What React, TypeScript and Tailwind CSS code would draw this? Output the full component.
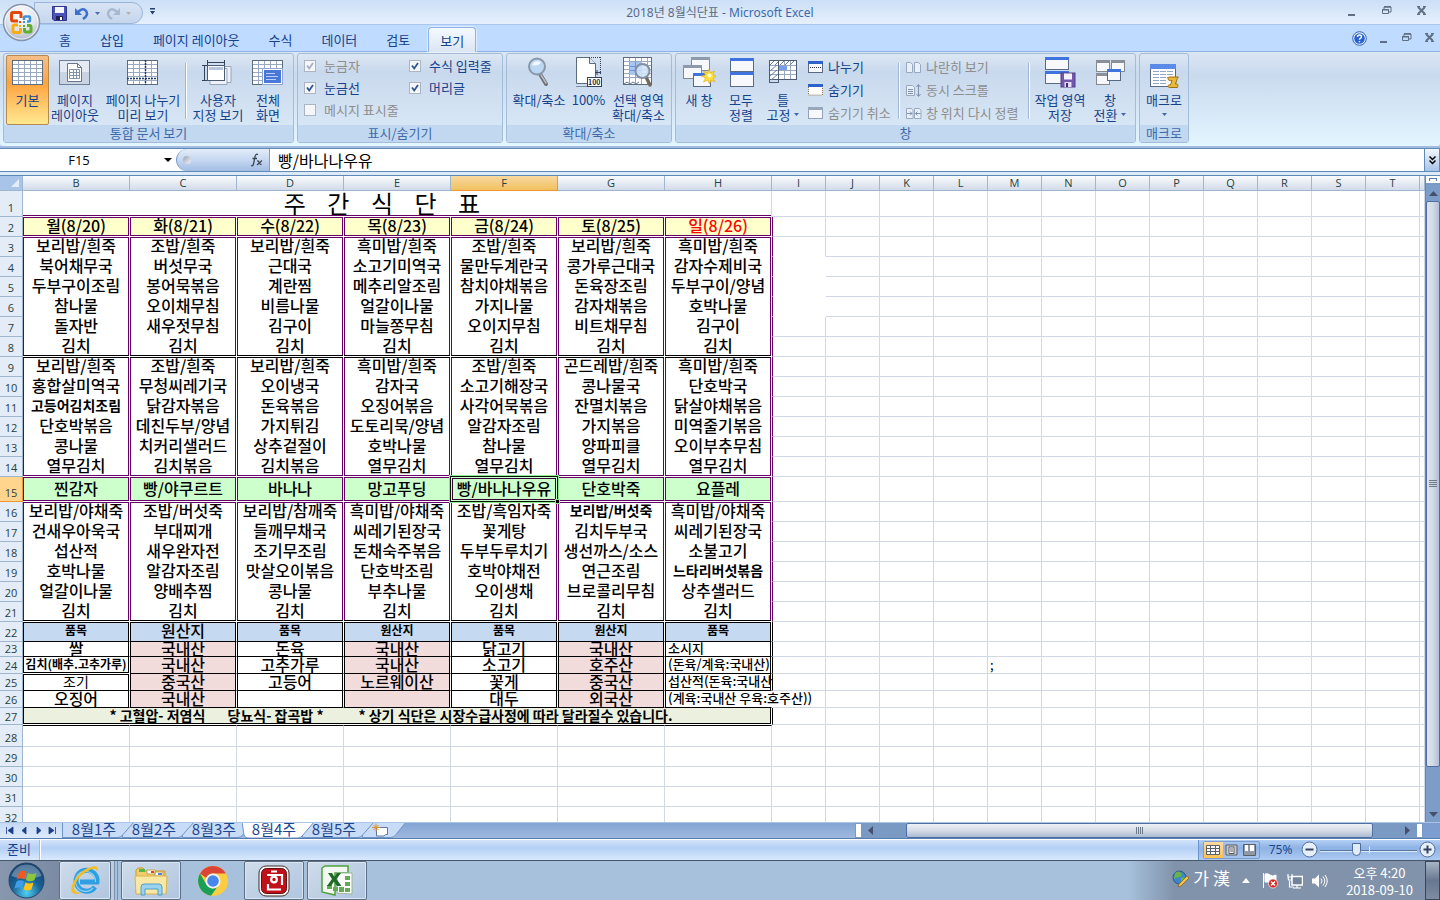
import React from 'react';
import clsx from 'clsx';

const MENU_COLUMNS = ['B', 'C', 'D', 'E', 'F', 'G', 'H'];
const EMPTY_COLUMNS = ['I', 'J', 'K', 'L', 'M', 'N', 'O', 'P', 'Q', 'R', 'S', 'T'];

// Rows 2 - 26 of the sheet, one entry per column B - H
const ROWS: Record<number, string[]> = {
    2: ['월(8/20)', '화(8/21)', '수(8/22)', '목(8/23)', '금(8/24)', '토(8/25)', '일(8/26)'],
    3: ['보리밥/흰죽', '조밥/흰죽', '보리밥/흰죽', '흑미밥/흰죽', '조밥/흰죽', '보리밥/흰죽', '흑미밥/흰죽'],
    4: ['북어채무국', '버섯무국', '근대국', '소고기미역국', '물만두계란국', '콩가루근대국', '감자수제비국'],
    5: ['두부구이조림', '봉어묵볶음', '계란찜', '메추리알조림', '참치야채볶음', '돈육장조림', '두부구이/양념'],
    6: ['참나물', '오이채무침', '비름나물', '얼갈이나물', '가지나물', '감자채볶음', '호박나물'],
    7: ['돌자반', '새우젓무침', '김구이', '마늘쫑무침', '오이지무침', '비트채무침', '김구이'],
    8: ['김치', '김치', '김치', '김치', '김치', '김치', '김치'],
    9: ['보리밥/흰죽', '조밥/흰죽', '보리밥/흰죽', '흑미밥/흰죽', '조밥/흰죽', '곤드레밥/흰죽', '흑미밥/흰죽'],
    10: ['홍합살미역국', '무청씨레기국', '오이냉국', '감자국', '소고기해장국', '콩나물국', '단호박국'],
    11: ['고등어김치조림', '닭감자볶음', '돈육볶음', '오징어볶음', '사각어묵볶음', '잔멸치볶음', '닭살야채볶음'],
    12: ['단호박볶음', '데친두부/양념', '가지튀김', '도토리묵/양념', '알감자조림', '가지볶음', '미역줄기볶음'],
    13: ['콩나물', '치커리샐러드', '상추겉절이', '호박나물', '참나물', '양파피클', '오이부추무침'],
    14: ['열무김치', '김치볶음', '김치볶음', '열무김치', '열무김치', '열무김치', '열무김치'],
    15: ['찐감자', '빵/야쿠르트', '바나나', '망고푸딩', '빵/바나나우유', '단호박죽', '요플레'],
    16: ['보리밥/야채죽', '조밥/버섯죽', '보리밥/참깨죽', '흑미밥/야채죽', '조밥/흑임자죽', '보리밥/버섯죽', '흑미밥/야채죽'],
    17: ['건새우아욱국', '부대찌개', '들깨무채국', '씨레기된장국', '꽃게탕', '김치두부국', '씨레기된장국'],
    18: ['섭산적', '새우완자전', '조기무조림', '돈채숙주볶음', '두부두루치기', '생선까스/소스', '소불고기'],
    19: ['호박나물', '알감자조림', '맛살오이볶음', '단호박조림', '호박야채전', '연근조림', '느타리버섯볶음'],
    20: ['얼갈이나물', '양배추찜', '콩나물', '부추나물', '오이생채', '브로콜리무침', '상추샐러드'],
    21: ['김치', '김치', '김치', '김치', '김치', '김치', '김치'],
    22: ['품목', '원산지', '품목', '원산지', '품목', '원산지', '품목'],
    23: ['쌀', '국내산', '돈육', '국내산', '닭고기', '국내산', '소시지'],
    24: ['김치(배추.고추가루)', '국내산', '고추가루', '국내산', '소고기', '호주산', '(돈육/계육:국내산)'],
    25: ['조기', '중국산', '고등어', '노르웨이산', '꽃게', '중국산', '섭산적(돈육:국내산'],
    26: ['오징어', '국내산', '', '', '대두', '외국산', '(계육:국내산 우육:호주산))'],
};

const NOTICE = '* 고혈압- 저염식       당뇨식- 잡곡밥 *           * 상기 식단은 시장수급사정에 따라 달라질수 있습니다.';

const ROW_NUMBERS = Array.from({ length: 32 }, (_, i) => i + 1);

function rowHeight(row: number) {
    if (row === 1) return 'h-[26px]';
    if (row === 15) return 'h-[25px]';
    if (row === 23) return 'h-[15px]';
    if (row >= 24 && row <= 27) return 'h-[17px]';
    if (row === 28) return 'h-[22px]';
    return 'h-[20px]';
}

// The double lines are drawn as an inset line on both sides of the grid line
function cellFrame(row: number, col: string) {
    if (row === 2 || row === 15) return 'border-b border-white shadow-[inset_0_0_0_1px_#660066]';
    if (row === 3 || row === 16) return 'border-white shadow-[inset_1px_0_0_0_#660066,inset_-1px_0_0_0_#660066,inset_0_1px_0_0_#660066]';
    if (row === 9) return 'border-white shadow-[inset_0_1px_0_0_#000000,inset_1px_0_0_0_#660066,inset_-1px_0_0_0_#660066]';
    if (row === 8 || row === 21) return 'border-b border-white shadow-[inset_0_-1px_0_0_#000000,inset_1px_0_0_0_#660066,inset_-1px_0_0_0_#660066]';
    if (row === 14) return 'border-b border-white shadow-[inset_1px_0_0_0_#660066,inset_-1px_0_0_0_#660066,inset_0_-1px_0_0_#660066]';
    if (row < 22) return 'border-white shadow-[inset_1px_0_0_0_#660066,inset_-1px_0_0_0_#660066]';
    if (row === 24 && col === 'B') return 'border-b border-white shadow-[inset_1px_0_0_0_#000000,inset_-1px_0_0_0_#000000,inset_0_-1px_0_0_#000000]';
    if (row === 22 || (row === 25 && col === 'B'))
        return 'border-b border-b-black border-r-white shadow-[inset_1px_0_0_0_#000000,inset_-1px_0_0_0_#000000,inset_0_1px_0_0_#000000]';
    if (row === 26 && col === 'H') return 'border-b border-b-black border-r-white shadow-[inset_1px_0_0_0_#000000]';
    return 'border-b border-b-black border-r-white shadow-[inset_1px_0_0_0_#000000,inset_-1px_0_0_0_#000000]';
}

function cellFill(row: number, col: string) {
    if (row === 2) return 'bg-[#ffffcc]';
    if (row === 15) return 'bg-[#ccffcc]';
    if (row === 22) return 'bg-[#c5d9f1]';
    if (row > 22 && 'CEG'.includes(col)) return 'bg-[#f2dcdb]';
    return 'bg-white';
}

function cellText(row: number, col: string) {
    const key = `${col}${row}`;
    if (key === 'H2') return 'text-center text-[16px] font-medium text-[#ff0000]';
    if (['B11', 'G16', 'H19'].includes(key)) return 'text-center text-[14px] font-bold';
    if (key === 'B25') return 'text-center text-[14px]';
    if (key === 'B24') return 'text-center text-[12px] font-bold';
    if (row === 22 && col !== 'C') return 'text-center text-[12px] font-bold';
    if (row > 22 && col === 'H') return 'pl-[3px] text-left text-[13px] font-medium';
    return 'text-center text-[16px] font-medium';
}

function lineHeight(row: number) {
    if (row === 15) return 'leading-[22px]';
    if (row === 23) return 'leading-[12px]';
    if (row >= 24 && row <= 27) return 'leading-[14px]';
    return 'leading-[16px]';
}

const MenuCell = ({ row, col, text }: { row: number; col: string; text: string }) => (
    <td
        className={clsx(
            'relative whitespace-nowrap border-r p-0 align-top',
            row === 15 && col === 'F' ? 'border-b border-white' : cellFrame(row, col),
            cellFill(row, col)
        )}
    >
        <div className={clsx(cellText(row, col), lineHeight(row))}>{text}</div>
        {row === 15 && col === 'F' && (
            <>
                <span className="absolute -inset-[2px] z-10 border border-[#8fe88f] shadow-[inset_0_0_0_1px_#001800]" />
                <span className="absolute inset-px z-10 border border-[#330033]" />
                <span className="absolute -bottom-[3px] -right-[3px] z-20 h-[5px] w-[5px] border border-[#8fe88f] bg-black" />
            </>
        )}
    </td>
);

const EmptyCell = ({ row, col }: { row: number; col: string }) => {
    const first = col === 'I';
    const hidden = first && row >= 3 && row < 7;
    return (
        <td
            className={clsx(
                'whitespace-nowrap border-b border-r p-0 align-middle',
                hidden ? 'border-b-white' : 'border-b-[#d0d7e5]',
                hidden && row > 3 ? 'border-r-white' : 'border-r-[#d0d7e5]',
                first && row >= 2 && row <= 21 && 'border-l border-l-[#660066]',
                first && row >= 22 && row <= 27 && row !== 26 && 'border-l border-l-black'
            )}
        >
            {row === 24 && col === 'M' && <div className="pl-0.5 text-[13px] leading-[14px]">;</div>}
        </td>
    );
};

const Sheet = () => (
    <table className="w-full table-fixed border-separate border-spacing-0 text-black">
        <colgroup>
            <col className="w-[23px]" />
            {MENU_COLUMNS.map((c) => (
                <col key={c} className="w-[107px]" />
            ))}
            {EMPTY_COLUMNS.map((c) => (
                <col key={c} className="w-[54px]" />
            ))}
            <col />
        </colgroup>
        <thead>
            <tr className="h-[15px]">
                <th className="border-b border-r border-[#9eb6ce] bg-[#a9c4e9] p-0">
                    <svg className="ml-auto mr-0.5 block" width="10" height="10" viewBox="0 0 10 10">
                        <path d="M9 1v8H1z" fill="#e4ecf7" />
                    </svg>
                </th>
                {[...MENU_COLUMNS, ...EMPTY_COLUMNS, ''].map((c) => (
                    <th
                        key={c}
                        scope="col"
                        className={clsx(
                            "border-b border-r p-0 font-['Open_Sans',sans-serif] text-[11px] font-normal leading-[14px] text-[#27413e]",
                            c === 'F'
                                ? 'border-[#f29536] bg-linear-to-b from-[#f9d99f] to-[#f1c15f]'
                                : 'border-[#9eb6ce] bg-linear-to-b from-[#f9fcfd] to-[#d3dbe9]'
                        )}
                    >
                        {c}
                    </th>
                ))}
            </tr>
        </thead>
        <tbody>
            {ROW_NUMBERS.map((row) => (
                <tr key={row} className={rowHeight(row)}>
                    <th
                        scope="row"
                        className={clsx(
                            "border-b border-r p-0 align-bottom font-['Open_Sans',sans-serif] text-[11px] font-normal text-[#27413e]",
                            row === 15 ? 'border-[#f29536] bg-[#ffd58d]' : 'border-[#9eb6ce] bg-[#e4ecf7]'
                        )}
                    >
                        <div className={row >= 23 && row <= 27 ? 'leading-[14px]' : 'leading-[16px]'}>{row}</div>
                    </th>
                    {row === 1 && (
                        <td
                            colSpan={7}
                            className="whitespace-pre border-b border-r border-b-white border-r-[#d0d7e5] p-0 pr-[30px] text-center align-top text-[24px] leading-[24px] shadow-[inset_0_-1px_0_0_#660066]"
                        >
                            {'주    간    식    단    표'}
                        </td>
                    )}
                    {ROWS[row]?.map((text, i) => (
                        <MenuCell key={MENU_COLUMNS[i]} row={row} col={MENU_COLUMNS[i]} text={text} />
                    ))}
                    {row === 27 && (
                        <td
                            colSpan={7}
                            className="whitespace-pre border-b border-r border-white bg-[#ebf1de] p-0 pr-3 text-center align-top text-[14px] font-bold leading-[14px] shadow-[inset_1px_0_0_0_#000000,inset_-1px_0_0_0_#000000,inset_0_-1px_0_0_#000000]"
                        >
                            {NOTICE}
                        </td>
                    )}
                    {row > 27 &&
                        MENU_COLUMNS.map((c) => (
                            <td
                                key={c}
                                className={clsx(
                                    'border-b border-r border-[#d0d7e5] p-0',
                                    row === 28 && 'border-t border-t-black'
                                )}
                            />
                        ))}
                    {[...EMPTY_COLUMNS, 'U'].map((c) => (
                        <EmptyCell key={c} row={row} col={c} />
                    ))}
                </tr>
            ))}
        </tbody>
    </table>
);

/* ---------- icons ---------- */

const GridLines = ({ x = 1, y = 4, w = 30, h = 24 }: { x?: number; y?: number; w?: number; h?: number }) => (
    <g>
        <rect x={x + 0.5} y={y + 0.5} width={w} height={h} fill="#fff" stroke="#5b6b80" />
        <path
            d={`M${x + 6.5} ${y + 1}v${h - 1}M${x + 12.5} ${y + 1}v${h - 1}M${x + 18.5} ${y + 1}v${h - 1}M${x + 24.5} ${y + 1}v${h - 1}M${x + 1} ${y + 4.5}h${w - 1}M${x + 1} ${y + 8.5}h${w - 1}M${x + 1} ${y + 12.5}h${w - 1}M${x + 1} ${y + 16.5}h${w - 1}M${x + 1} ${y + 20.5}h${w - 1}`}
            stroke="#9aa9c2"
            fill="none"
        />
    </g>
);

const Win = ({ x, y, w, h, bar = '#3f74de', line = '#5a6a82' }: { x: number; y: number; w: number; h: number; bar?: string; line?: string }) => (
    <g>
        <rect x={x + 0.5} y={y + 0.5} width={w} height={h} fill="#f6f8fc" stroke={line} />
        <rect x={x} y={y} width={w + 1} height="3" fill={bar} />
    </g>
);

const icons: Record<string, React.ReactNode> = {
    normal: <GridLines />,
    pageLayout: (
        <>
            <rect x="1.5" y="4.5" width="30" height="24" fill="#e4eaf3" stroke="#6f7f96" />
            <path d="M2 16h29v12H2z" fill="#c9d3e2" />
            <path d="M9.5 7.500h10l4 4v14h-14z" fill="#fff" stroke="#66768e" />
            <path d="M19.500 7.500v4h4" fill="none" stroke="#66768e" />
            <path d="M11.500 13.500h10v9h-10zM11.500 16.500h10M11.500 19.500h10M15.500 13.500v9M18.500 13.500v9" fill="none" stroke="#8291a8" />
        </>
    ),
    pageBreak: (
        <>
            <GridLines />
            <path d="M19.500 4v25M1 22.500h31" stroke="#1f3d70" strokeDasharray="2 1" fill="none" strokeWidth="1.5" />
        </>
    ),
    custom: (
        <>
            <path d="M13 10.500h17v16H13z" fill="#eef2f8" stroke="#97a5ba" />
            <path d="M9 12.500h17v16H9z" fill="#eef2f8" stroke="#97a5ba" />
            <rect x="6.500" y="9.500" width="17" height="15" fill="#fff" stroke="#4d5c72" />
            <path d="M8 11h14v3H8z" fill="#b8c6db" />
            <path d="M6 6.500h18M6.500 4v5M23.500 4v5M3.500 9v16M1 9.500h5M1 24.500h5" stroke="#33435c" fill="none" />
        </>
    ),
    fullScreen: (
        <>
            <GridLines />
            <rect x="11.500" y="12.500" width="20" height="16" fill="#fff" stroke="#8fa6d4" />
            <rect x="13" y="14" width="17" height="13" fill="#4a78d8" />
            <path d="M15 17.500h9M15 20.500h12M15 23.500h10" stroke="#b9d0ff" />
        </>
    ),
    zoom: (
        <>
            <path d="M18 18l6 10" stroke="#6e7076" strokeWidth="4" strokeLinecap="round" />
            <path d="M19 19l5 8" stroke="#b9bcc2" strokeWidth="1.500" strokeLinecap="round" />
            <circle cx="15" cy="10.500" r="8" fill="#bcd7f3" stroke="#8a97a8" strokeWidth="2" />
            <path d="M10 9a6 5 0 019-3c-2 4-6 4-9 3z" fill="#f1f8ff" />
        </>
    ),
    hundred: (
        <>
            <path d="M4.500 1.500h13l6 6v20h-19z" fill="#fff" stroke="#5b6b80" />
            <path d="M17.500 1.500v6h6" fill="#dde6f2" stroke="#5b6b80" />
            <path d="M17 1.500h12M28.500 1v18M4.500 30.500h11" stroke="#33435c" strokeDasharray="1 1" />
            <path d="M23 16.500h6M25 14v5" stroke="#33435c" fill="none" />
            <rect x="15.500" y="21.500" width="14" height="9" fill="#fff" stroke="#33435c" />
            <text x="16" y="29" fontSize="7" fontWeight="700" fill="#1b2a44">100</text>
        </>
    ),
    zoomSelection: (
        <>
            <GridLines x={1} y={1} w={28} h={27} />
            <path d="M8 6h12v13H8z" fill="#a8c6f5" />
            <path d="M8 10.500h12M8 14.500h12M13.500 6v13" stroke="#6c93d8" />
            <path d="M24 21l4 8" stroke="#75695e" strokeWidth="3.500" strokeLinecap="round" />
            <circle cx="20.500" cy="15" r="7" fill="#cfe3f8" fillOpacity=".85" stroke="#8390a2" strokeWidth="2" />
            <path d="M2 28l3-2 3 2 3-2 3 2 3-2" stroke="#66768e" fill="none" />
        </>
    ),
    newWindow: (
        <>
            <Win x={9} y={1} w={18} h={13} bar="#8e99ab" line="#7c889b" />
            <Win x={1} y={9} w={18} h={13} bar="#8e99ab" line="#7c889b" />
            <Win x={11} y={17} w={17} h={13} />
            <path d="M27 13l1.500 4 4-2-1.500 4 4 1-4 2 2 4-4-2-1.500 4-2-4-4 2 2-4-4-2 4-1-2-4 4 2z" fill="#ffdf3a" stroke="#e0a810" strokeWidth=".6" />
            <circle cx="27.500" cy="19.500" r="2" fill="#fffbd0" />
        </>
    ),
    arrange: (
        <>
            <Win x={6} y={2} w={23} h={13} />
            <Win x={6} y={16} w={23} h={14} />
        </>
    ),
    freeze: (
        <>
            <rect x="3.500" y="4.500" width="27" height="19" fill="#fff" stroke="#4d5c72" />
            <path d="M4 9.500h26M12.500 5v18M4 14.500h26M4 18.500h26M18.500 5v18M24.500 5v18" stroke="#9aa9c2" />
            <path d="M4 9l4-4M9 9l4-4M14 9l4-4M19 9l4-4M24 9l4-4M4 15l7-6M4 20l7-6M5 24l7-6" stroke="#6b82ad" />
            <path d="M13 10h8v4h-8z" fill="#76a0ec" />
            <rect x="3.500" y="4.500" width="9" height="22" fill="none" stroke="#4d5c72" />
        </>
    ),
    saveWorkspace: (
        <>
            <Win x={2} y={1} w={23} h={12} />
            <Win x={2} y={15} w={23} h={12} />
            <rect x="18" y="17" width="14" height="14" fill="#7357ad" stroke="#533c88" />
            <rect x="21" y="17.500" width="8" height="6" fill="#f5f2fc" />
            <rect x="21.500" y="26" width="7" height="5" fill="#e3dcf2" />
            <rect x="23" y="27" width="2" height="4" fill="#3d2b68" />
        </>
    ),
    switchWindows: (
        <>
            <Win x={3} y={4} w={13} h={11} bar="#8a8f98" line="#83888f" />
            <Win x={18} y={4} w={13} h={11} bar="#8a8f98" line="#83888f" />
            <Win x={3} y={17} w={13} h={11} bar="#8a8f98" line="#83888f" />
            <Win x={14} y={13} w={13} h={11} />
        </>
    ),
    macro: (
        <>
            <rect x="3.500" y="8.500" width="25" height="22" fill="#fff" stroke="#5a6a82" />
            <path d="M3 8h26v5H3z" fill="#5b8be8" />
            <path d="M6 15.500h20M6 18.500h20M6 21.500h20M6 24.500h14M6 27.500h13" stroke="#90a5cc" strokeDasharray="6 1" />
            <path d="M21 22.500c0-1.500 1-1.500 2-1.500h8.500c-1 1-1.500 2-2 4l-1 3c2 0 3 0 2 3.500h-8c-2 0-2-2.500-.5-2.500h1.500l1.500-4.500c-2 .5-4 0-4-2z" fill="#e9b93c" stroke="#9c6f10" />
        </>
    ),
};

const Down = ({ className }: { className?: string }) => (
    <svg className={clsx('inline-block', className)} width="5" height="3" viewBox="0 0 5 3">
        <path d="M0 0h5L2.500 3z" fill="currentColor" />
    </svg>
);

/* ---------- ribbon ---------- */

interface BigButtonProps {
    icon: string;
    lines: string[];
    width: string;
    arrow?: boolean;
    active?: boolean;
}

const BigButton = ({ icon, lines, width, arrow, active }: BigButtonProps) => (
    <button
        className={clsx(
            'flex h-[70px] shrink-0 flex-col items-center whitespace-nowrap rounded-[2px] border',
            width,
            active
                ? 'border-[#b3894f] bg-linear-to-b from-[#f5bf86] via-[#fca33c] via-40% to-[#ffe88f]'
                : 'border-transparent'
        )}
    >
        <svg width="34" height="32" viewBox="0 0 34 32" className="mb-1 shrink-0">
            {icons[icon]}
        </svg>
        {lines.map((line, i) => (
            <span key={i} className="flex h-[15px] items-center leading-[15px]">
                {line}
                {arrow && i === lines.length - 1 && <Down className={line ? 'ml-1 text-[#3d68b0]' : 'text-[#3d68b0]'} />}
            </span>
        ))}
    </button>
);

const Separator = () => <div className="mt-2 h-[56px] w-[2px] shrink-0 border-l border-[#9fb6d3] bg-white" />;

const Group = ({ label, width, children }: { label: string; width: string; children: React.ReactNode }) => (
    <section
        className={clsx(
            'flex h-[90px] shrink-0 flex-col overflow-hidden rounded-[3px] border border-[#a3bcd8] bg-linear-to-b from-[#dde7f3] via-[#c9d9ed] via-20% to-[#dcebf8]',
            width
        )}
    >
        <div className="flex flex-1 px-[2px] pt-px">{children}</div>
        <h2 className="h-[17px] bg-[#c1d8f0] text-center leading-[16px] text-[#3e6aaa]">{label}</h2>
    </section>
);

const Check = ({ label, checked, disabled }: { label: string; checked?: boolean; disabled?: boolean }) => (
    <label className={clsx('flex h-[22px] items-center gap-2 whitespace-nowrap', disabled && 'text-[#8d8d8d]')}>
        <span className="relative h-3 w-3">
            <input
                type="checkbox"
                defaultChecked={checked}
                disabled={disabled}
                className="block h-3 w-3 appearance-none border border-[#abb5c2] bg-[#f4f6f9]"
            />
            {checked && (
                <svg className="pointer-events-none absolute inset-0" width="12" height="12" viewBox="0 0 12 12">
                    <path d="M3 5.500l2.200 3L9 3" fill="none" stroke={disabled ? '#a4afc4' : '#33558f'} strokeWidth="1.800" />
                </svg>
            )}
        </span>
        {label}
    </label>
);

const smallIcons: Record<string, React.ReactNode> = {
    split: (
        <>
            <Win x={0} y={2} w={14} h={11} bar="#2f62c8" />
            <path d="M2 8.500h11" stroke="#222c3d" strokeDasharray="1 1" />
        </>
    ),
    hide: (
        <>
            <path d="M.5 5v8h14V5" fill="#fff" stroke="#8a7a4c" strokeDasharray="1 1" />
            <path d="M0 2h15v3H0z" fill="#2f62c8" />
        </>
    ),
    unhide: <Win x={0} y={2} w={14} h={11} bar="#9aa7bb" line="#93a0b5" />,
    side: <path d="M.5 3.500h4l2 2v8h-6zM8.500 3.500h4l2 2v8h-6z" fill="#eaf0f8" stroke="#98a8c1" />,
    sync: (
        <>
            <path d="M.5 3.500h6l2 2v8h-8z" fill="#eaf0f8" stroke="#98a8c1" />
            <path d="M2 7.500h5M2 9.500h5M2 11.500h5M12.500 3v11M10.500 5l2-2.500 2 2.500M10.500 12l2 2.500 2-2.500" stroke="#7f90ac" fill="none" />
        </>
    ),
    reset: (
        <>
            <path d="M.5 3.500h5l1.500 2v8H.5zM8.500 3.500h5l1.500 2v8H8.500z" fill="#eaf0f8" stroke="#98a8c1" />
            <path d="M1 8.500h5M4 6.500l2 2-2 2M14.500 8.500h-5M11.500 6.500l-2 2 2 2" stroke="#7f90ac" fill="none" />
        </>
    ),
};

const SmallButton = ({ icon, label, disabled }: { icon: string; label: string; disabled?: boolean }) => (
    <button disabled={disabled} className={clsx('flex h-[23px] items-center gap-1 whitespace-nowrap', disabled && 'text-[#8d8d8d]')}>
        <svg width="16" height="16" viewBox="0 0 16 16" className="shrink-0">
            {smallIcons[icon]}
        </svg>
        {label}
    </button>
);

const Ribbon = () => (
    <div className="flex h-[95px] shrink-0 gap-[3px] overflow-hidden rounded-b border-t border-[#8db2e3] bg-linear-to-b from-[#dbe6f4] via-[#c9daee] via-25% to-[#e3f6ff] pl-[3px] pt-px text-[#15428b]">
        <Group label="통합 문서 보기" width="w-[291px]">
            <BigButton icon="normal" lines={['기본']} width="w-[43px]" active />
            <BigButton icon="pageLayout" lines={['페이지', '레이아웃']} width="w-[52px]" />
            <BigButton icon="pageBreak" lines={['페이지 나누기', '미리 보기']} width="w-[84px]" />
            <Separator />
            <BigButton icon="custom" lines={['사용자', '지정 보기']} width="w-[62px]" />
            <BigButton icon="fullScreen" lines={['전체', '화면']} width="w-[38px]" />
        </Group>
        <Group label="표시/숨기기" width="w-[206px]">
            <div className="grid grid-cols-[105px_1fr] content-start pl-1">
                <Check label="눈금자" checked disabled />
                <Check label="수식 입력줄" checked />
                <Check label="눈금선" checked />
                <Check label="머리글" checked />
                <Check label="메시지 표시줄" disabled />
            </div>
        </Group>
        <Group label="확대/축소" width="w-[166px]">
            <BigButton icon="zoom" lines={['확대/축소']} width="w-[60px]" />
            <BigButton icon="hundred" lines={['100%']} width="w-[39px]" />
            <BigButton icon="zoomSelection" lines={['선택 영역', '확대/축소']} width="w-[61px]" />
        </Group>
        <Group label="창" width="w-[461px]">
            <BigButton icon="newWindow" lines={['새 창']} width="w-[42px]" />
            <BigButton icon="arrange" lines={['모두', '정렬']} width="w-[42px]" />
            <BigButton icon="freeze" lines={['틀', '고정']} width="w-[42px]" arrow />
            <div className="flex w-[94px] shrink-0 flex-col pl-1">
                <SmallButton icon="split" label="나누기" />
                <SmallButton icon="hide" label="숨기기" />
                <SmallButton icon="unhide" label="숨기기 취소" disabled />
            </div>
            <Separator />
            <div className="flex w-[128px] shrink-0 flex-col pl-1.5">
                <SmallButton icon="side" label="나란히 보기" disabled />
                <SmallButton icon="sync" label="동시 스크롤" disabled />
                <SmallButton icon="reset" label="창 위치 다시 정렬" disabled />
            </div>
            <Separator />
            <BigButton icon="saveWorkspace" lines={['작업 영역', '저장']} width="w-[60px]" />
            <BigButton icon="switchWindows" lines={['창', '전환']} width="w-[40px]" arrow />
        </Group>
        <Group label="매크로" width="w-[50px]">
            <BigButton icon="macro" lines={['매크로', '']} width="w-[44px]" arrow />
        </Group>
    </div>
);

/* ---------- window chrome ---------- */

const MinIcon = () => (
    <svg width="12" height="12" viewBox="0 0 12 12">
        <path d="M2 9h7v2H2z" fill="#5f6f84" />
    </svg>
);
const RestoreIcon = () => (
    <svg width="12" height="12" viewBox="0 0 12 12">
        <path d="M3 4V2h7v5H8" fill="none" stroke="#5f6f84" />
        <path d="M1.500 4.500h6v4h-6z" fill="none" stroke="#5f6f84" />
        <path d="M1 4h7v1.500H1zM3 1h7v1.500H3z" fill="#5f6f84" />
    </svg>
);
const CloseIcon = () => (
    <svg width="12" height="12" viewBox="0 0 12 12">
        <path d="M2 2l7 7M9 2L2 9" stroke="#5f6f84" strokeWidth="2" />
        <path d="M1 1.500h3M7 1.500h3M1 9.500h3M7 9.500h3" stroke="#5f6f84" />
    </svg>
);

const OfficeButton = () => (
    <button aria-label="Office" className="absolute left-[2px] top-[3px] z-20">
        <svg width="40" height="40" viewBox="0 0 40 40">
            <defs>
                <radialGradient id="orb" cx=".5" cy=".3" r=".7">
                    <stop offset="0" stopColor="#ffffff" />
                    <stop offset=".6" stopColor="#dfe4ec" />
                    <stop offset="1" stopColor="#a9b4c6" />
                </radialGradient>
            </defs>
            <circle cx="19.500" cy="19.500" r="18" fill="url(#orb)" stroke="#8593ab" strokeWidth="1.500" />
            <circle cx="19.500" cy="19.500" r="16.500" fill="none" stroke="#fff" strokeOpacity=".8" />
            <g fill="none" strokeWidth="3">
                <path d="M16 18h-5q-1.500 0-1.500-1.500V11q0-1.500 1.500-1.500h6.500Q19 9.500 19 11v4" stroke="#e0480e" />
                <path d="M22 17v-2.500q0-1 1-1h4q1 0 1 1v3q0 1-1 1h-2" stroke="#3d94dc" strokeWidth="2.500" />
                <path d="M16 22h-3.500q-1.500 0-1.500 1.500v4.500q0 1.500 1.500 1.500h4.500q1.500 0 1.500-1.500v-3" stroke="#f7ad12" />
                <path d="M22.500 25v2.500q0 1.500 1.500 1.500h3.500q1.500 0 1.500-1.500v-3.500q0-1.500-1.500-1.500h-2.500" stroke="#5fae2e" />
            </g>
            <path d="M17 18h2v2h-2z" fill="#e0480e" />
            <path d="M21 18h2v2h-2z" fill="#3d94dc" />
            <path d="M17 22h2v2h-2z" fill="#f7ad12" />
            <path d="M21 22h2v2h-2z" fill="#5fae2e" />
        </svg>
    </button>
);

const TitleBar = () => (
    <header className="relative flex h-[25px] shrink-0 items-center border-b border-[#a9c8ef] bg-linear-to-b from-[#cbdff7] to-[#e6f0fc]">
        <div className="absolute left-[34px] top-[2px] flex h-[22px] w-[109px] items-center rounded-r-full border border-[#9ab5d8] bg-linear-to-b from-[#d8e4f4] to-[#c5d6ed] pl-[17px]">
            <button aria-label="저장">
                <svg width="15" height="15" viewBox="0 0 15 15">
                    <path d="M.5.500h14v14H2l-1.500-1.500z" fill="#4a54b8" stroke="#30368c" />
                    <path d="M3 1h9v6H3z" fill="#f3f6ff" />
                    <path d="M4 10h7v4H4z" fill="#1c2050" />
                    <path d="M8 11h2v3H8z" fill="#fff" />
                </svg>
            </button>
            <button aria-label="실행 취소" className="ml-2 flex items-center gap-1.5 text-[#4a6fae]">
                <svg width="14" height="14" viewBox="0 0 14 14">
                    <path d="M3 6q5-5 8-1t-3 8" fill="none" stroke="#3b6fd0" strokeWidth="2.500" />
                    <path d="M0 2v7h7z" fill="#3b6fd0" />
                </svg>
                <Down />
            </button>
            <button aria-label="다시 실행" className="ml-1.5 flex items-center gap-1.5 text-[#b6b0ac]">
                <svg width="14" height="14" viewBox="0 0 14 14">
                    <path d="M11 6q-5-5-8-1t3 8" fill="none" stroke="#a9b8cf" strokeWidth="2.500" />
                    <path d="M14 2v7H7z" fill="#a9b8cf" />
                </svg>
                <Down />
            </button>
        </div>
        <button aria-label="빠른 실행 도구 모음 사용자 지정" className="absolute left-[149px] top-[8px]">
            <svg width="7" height="7" viewBox="0 0 7 7">
                <path d="M1 0h5v1.500H1zM1 3h5L3.500 6.500z" fill="#24406e" />
            </svg>
        </button>
        <h1 className="flex-1 whitespace-pre pt-0.5 text-center font-['Noto_Sans','Noto_Sans_CJK_KR',sans-serif] text-[12px] leading-4 text-[#3e6aaa]">
            <span className="text-[#5c6b85]">2018년 8월식단표</span> - Microsoft Excel
        </h1>
        <div className="absolute right-[12px] top-[5px] flex gap-[23px]">
            <button aria-label="최소화"><MinIcon /></button>
            <button aria-label="이전 크기로"><RestoreIcon /></button>
            <button aria-label="닫기"><CloseIcon /></button>
        </div>
    </header>
);

const TABS = ['홈', '삽입', '페이지 레이아웃', '수식', '데이터', '검토', '보기'];

const RibbonTabs = () => (
    <nav className="flex h-[26px] shrink-0 items-end bg-[#bfdbff] pl-[45px] pr-1 text-[#15428b]">
        <div className="flex flex-1 gap-px">
            {TABS.map((tab) => (
                <button
                    key={tab}
                    className={clsx(
                        'relative -mb-px h-[25px] whitespace-nowrap leading-[23px]',
                        tab === '보기'
                            ? 'z-10 ml-[3px] rounded-t-[4px] border border-b-0 border-[#8db2e3] bg-linear-to-b from-[#f3f9ff] to-[#dbe6f4] px-[11px] ring-1 ring-white/50'
                            : 'px-3.5'
                    )}
                >
                    {tab}
                </button>
            ))}
        </div>
        <div className="flex h-full items-center gap-[11px]">
            <button aria-label="도움말">
                <svg width="15" height="15" viewBox="0 0 15 15">
                    <circle cx="7.500" cy="7.500" r="6.800" fill="#eaf3ff" stroke="#3260b4" />
                    <circle cx="7.500" cy="7.500" r="5.300" fill="#2a62d2" />
                    <path d="M5.500 6q0-2 2-2t2 1.700q0 1-1.200 1.700-.8.500-.8 1.300M7.500 10v1.300" stroke="#fff" strokeWidth="1.400" fill="none" />
                </svg>
            </button>
            <button aria-label="창 최소화"><MinIcon /></button>
            <button aria-label="창 복원"><RestoreIcon /></button>
            <button aria-label="창 닫기"><CloseIcon /></button>
        </div>
    </nav>
);

const FormulaBar = () => (
    <div className="h-[30px] shrink-0 border-b border-[#5f8ab5] bg-[#dbe9f9]">
        <div className="h-[2px] bg-[#a3bbdf]" />
        <div className="flex h-[24px] border-y border-[#5f8ab5] bg-white text-black">
            <input
                aria-label="이름 상자"
                defaultValue="F15"
                className="w-[158px] bg-white text-center font-['Open_Sans',sans-serif] text-[13px] outline-none"
            />
            <button aria-label="이름 목록" className="w-[18px] pl-1.5">
                <svg width="8" height="4" viewBox="0 0 8 4">
                    <path d="M0 0h8L4 4z" fill="#000" />
                </svg>
            </button>
            <div className="flex w-[94px] items-center justify-between rounded-l-full border-l border-r border-[#7aa0cc] bg-linear-to-b from-[#e4ecf8] via-[#c6d8f1] to-[#a2bde4] pl-1.5 pr-1.5">
                <span className="h-2 w-2 rounded-full bg-linear-to-br from-[#9aa3b4] to-[#f3f6fb]" />
                <button aria-label="함수 삽입">
                    <svg width="13" height="14" viewBox="0 0 13 14">
                        <path d="M8 1.500Q5.500.5 5 4L3.500 11Q3 13.500 1 12.500M2.500 5.500h4.500M7 8q1.500-.5 2 1.500T11.500 11.500M12 7.500L7 12" stroke="#3e4654" strokeWidth="1.300" fill="none" />
                    </svg>
                </button>
            </div>
            <input
                aria-label="수식 입력줄"
                defaultValue="빵/바나나우유"
                className="min-w-0 flex-1 bg-white pl-2 text-[16px] outline-none"
            />
            <button
                aria-label="수식 입력줄 확장"
                className="flex w-4 items-center justify-center border-x border-[#5f8ab5] bg-linear-to-b from-[#f3f7fd] to-[#a8c3e8]"
            >
                <svg width="7" height="9" viewBox="0 0 7 9">
                    <path d="M.5.500l3 3 3-3M.5 4.500l3 3 3-3" fill="none" stroke="#000" strokeWidth="1.500" />
                </svg>
            </button>
        </div>
    </div>
);

const VerticalScrollbar = () => (
    <div className="flex w-[15px] shrink-0 flex-col border-l border-[#5f8ab5] bg-[#7d9dc9]">
        <div className="flex h-[9px] items-center justify-center border-b-2 border-[#7a9ac6] bg-white">
            <div className="h-[3px] w-2 border-x border-t border-[#5079b5]" />
        </div>
        <button aria-label="위로" className="flex h-4 shrink-0 items-center justify-center">
            <svg width="9" height="5" viewBox="0 0 9 5">
                <path d="M4.500 0L9 5H0z" fill="#44506e" />
            </svg>
        </button>
        <div className="flex grow-[565] items-center justify-center rounded-[2px] border border-[#4f6fa3] bg-linear-to-r from-[#dfe5ee] via-[#d2dae6] to-[#aebfd6]">
            <svg width="8" height="8" viewBox="0 0 8 8">
                <path d="M0 .5h8M0 2.500h8M0 4.500h8M0 6.500h8" stroke="#6d7888" />
            </svg>
        </div>
        <div className="grow-[40]" />
        <button aria-label="아래로" className="flex h-4 shrink-0 items-center justify-center">
            <svg width="9" height="5" viewBox="0 0 9 5">
                <path d="M4.500 5L9 0H0z" fill="#44506e" />
            </svg>
        </button>
    </div>
);

const SHEETS = [
    { name: '8월1주', layer: 'z-[5]' },
    { name: '8월2주', layer: 'z-[4]' },
    { name: '8월3주', layer: 'z-[3]' },
    { name: '8월4주', layer: 'z-[6]' },
    { name: '8월5주', layer: 'z-[2]' },
];

const NAV = [
    { label: '첫 시트', d: 'M1.500 1v7M8 1v7L3 4.500z' },
    { label: '이전 시트', d: 'M7 1v7L3 4.500z' },
    { label: '다음 시트', d: 'M3 1v7l4-3.500z' },
    { label: '마지막 시트', d: 'M7.500 1v7M1 1v7l5-3.500z' },
];

const SheetTabs = () => (
    <div className="flex h-[17px] shrink-0 overflow-hidden border-b border-t border-b-[#567db1] border-t-[#a9c5e8] bg-linear-to-b from-[#84a4d3] to-[#9fb8df]">
        <div className="flex w-[62px] items-center justify-around bg-linear-to-b from-[#c6daf5] to-[#dce9fb] px-0.5">
            {NAV.map((n) => (
                <button key={n.label} aria-label={n.label}>
                    <svg width="9" height="9" viewBox="0 0 9 9" className="block">
                        <path d={n.d} fill="#1c3f86" stroke="#1c3f86" strokeWidth=".8" />
                    </svg>
                </button>
            ))}
        </div>
        <div className="flex">
            {SHEETS.map((s) => (
                <button key={s.name} className={clsx('relative flex w-[60px] items-start justify-center pl-1 text-[15px] leading-[12px] text-[#1f4690]', s.layer)}>
                    <svg className="absolute left-0 top-0" width="74" height="15" viewBox="0 0 74 15">
                        <path
                            d={s.name === '8월4주' ? 'M0 -1L2 12q1 3 4 3H56q3 0 5-3L72 -1z' : 'M.5 -1V14.500H56q3 0 5-3L72 -1z'}
                            fill={s.name === '8월4주' ? '#ffffff' : '#c9dcf7'}
                            stroke="#6f93c5"
                        />
                    </svg>
                    <span className="relative">{s.name}</span>
                </button>
            ))}
            <button aria-label="워크시트 삽입" className="relative z-[1] w-[46px]">
                <svg className="absolute left-0 top-0" width="46" height="15" viewBox="0 0 46 15">
                    <path d="M.5 -1V14.500H29q3 0 5-3L44 -1z" fill="#c9dcf7" stroke="#6f93c5" />
                    <path d="M14.500 4.500h11v7h-2l-1.500 1.500h-7.500z" fill="#fff" stroke="#61799f" />
                    <path d="M14 .5v8M10 4.500h8M11.500 2l5 5M16.500 2l-5 5" stroke="#e0912a" />
                </svg>
            </button>
        </div>
        <div className="flex-1" />
        <div className="flex w-[568px]">
            <div className="w-[7px] border border-[#7a9ac6] bg-white" />
            <button aria-label="왼쪽으로" className="flex w-[44px] items-center bg-[#7a9ac4] pl-1.5">
                <svg width="5" height="9" viewBox="0 0 5 9">
                    <path d="M5 0v9L0 4.500z" fill="#44506e" />
                </svg>
            </button>
            <div className="flex w-[467px] items-center justify-center rounded-[2px] border border-[#4f6fa3] bg-linear-to-b from-[#eef1f5] via-[#d5dce6] to-[#a9bbd2]">
                <svg width="8" height="7" viewBox="0 0 8 7">
                    <path d="M.5 0v7M2.500 0v7M4.500 0v7M6.500 0v7" stroke="#6d7888" />
                </svg>
            </div>
            <button aria-label="오른쪽으로" className="flex flex-1 items-center justify-end bg-[#7a9ac4] pr-1.5">
                <svg width="5" height="9" viewBox="0 0 5 9">
                    <path d="M0 0v9l5-4.500z" fill="#44506e" />
                </svg>
            </button>
            <div className="w-[7px] border border-[#7a9ac6] bg-white" />
        </div>
        <div className="w-[17px] bg-[#7d9dd0]" />
    </div>
);

const ZoomCircle = ({ plus }: { plus?: boolean }) => (
    <svg width="17" height="17" viewBox="0 0 17 17" className="block">
        <circle cx="8.500" cy="8.500" r="7.500" fill="#e6eef9" stroke="#4e6c9c" />
        <path d={plus ? 'M4.500 8.500h8M8.500 4.500v8' : 'M4.500 8.500h8'} stroke="#34445f" strokeWidth="2" />
    </svg>
);

const StatusBar = () => (
    <div className="flex h-[21px] shrink-0 border-t border-white bg-linear-to-b from-[#d3e4fb] via-[#b3d0f5] via-40% to-[#d9e9fc] leading-[18px] text-[#15428b]">
        <span className="w-[40px] border-r border-[#9dbce6] pl-[7px] text-[13px]">준비</span>
        <div className="flex-1 border-l border-white" />
        <div className="flex w-[242px] items-center border-l border-[#6c93cb] bg-linear-to-b from-[#b4d0f5] via-[#8db2e5] via-40% to-[#aecbf2] pb-px pl-1">
            <div className="flex h-[18px] items-center rounded-[2px] border border-[#7d9ecb]">
                <button aria-label="기본 보기" className="h-full w-[19px] bg-linear-to-b from-[#fbd9a4] to-[#ffc14f] pl-0.5">
                    <svg width="14" height="12" viewBox="0 0 14 12" className="block">
                        <path d="M.5 1.500h13v9H.5zM.5 4.500h13M.5 7.500h13M4.500 1.500v9M9.500 1.500v9" fill="#fff" stroke="#5b5f66" />
                    </svg>
                </button>
                <button aria-label="페이지 레이아웃 보기" className="w-[18px] pl-0.5">
                    <svg width="13" height="12" viewBox="0 0 13 12" className="block">
                        <path d="M1 1h11v10H1z" fill="#c3c8d0" stroke="#5b5f66" />
                        <path d="M4 3h5v6.500H4zM5 5h3M5 7h3" fill="#fff" stroke="#5b5f66" />
                    </svg>
                </button>
                <button aria-label="페이지 나누기 보기" className="w-[18px] pl-0.5">
                    <svg width="13" height="12" viewBox="0 0 13 12" className="block">
                        <path d="M.5.500h12v11H.5z" fill="#9299a6" stroke="#5b5f66" />
                        <path d="M2 1h3v6H2zM7 1h4v6H7z" fill="#fff" />
                    </svg>
                </button>
            </div>
            <button className="w-[41px] text-center font-['Open_Sans',sans-serif] text-[12px]">75%</button>
            <button aria-label="축소"><ZoomCircle /></button>
            <div className="relative mx-0.5 flex-1">
                <div className="absolute inset-x-0 top-1/2 h-px bg-[#55749f] shadow-[0_1px_0_0_#dbe9fb]" />
                <div className="absolute left-1/2 top-1/2 h-[7px] w-px -translate-y-1/2 bg-[#dbe9fb]" />
                <input
                    type="range"
                    aria-label="확대/축소 비율"
                    defaultValue={36}
                    className="relative block h-[19px] w-full appearance-none bg-transparent [&::-webkit-slider-thumb]:h-[13px] [&::-webkit-slider-thumb]:w-[9px] [&::-webkit-slider-thumb]:appearance-none [&::-webkit-slider-thumb]:rounded-b-[5px] [&::-webkit-slider-thumb]:border [&::-webkit-slider-thumb]:border-[#4e6c9c] [&::-webkit-slider-thumb]:bg-[#e2ebf8]"
                />
            </div>
            <button aria-label="확대" className="mr-1"><ZoomCircle plus /></button>
        </div>
    </div>
);

/* ---------- windows taskbar ---------- */

const TaskButton = ({ label, open, width, children }: { label: string; open?: boolean; width: string; children: React.ReactNode }) => (
    <button
        aria-label={label}
        className={clsx(
            'flex h-[39px] items-center justify-center rounded-[2px] border',
            width,
            open ? 'border-[#5d6f87] bg-linear-to-br from-[#cfdcea] to-[#afc5df] shadow-[inset_0_0_0_1px_#dbe6f2]' : 'border-transparent'
        )}
    >
        {children}
    </button>
);

const Taskbar = () => (
    <footer className="flex h-10 shrink-0 items-stretch border-t border-[#46566b] bg-[#a7c0dc] text-white">
        <div className="flex w-[59px] items-center bg-linear-to-r from-[#8697ae] to-[#7b8ba3] pl-2">
            <button aria-label="시작">
                <svg width="37" height="37" viewBox="0 0 37 37" className="block">
                    <defs>
                        <radialGradient id="start" cx=".5" cy=".85" r=".9">
                            <stop offset="0" stopColor="#4fd0f5" />
                            <stop offset=".45" stopColor="#1a6296" />
                            <stop offset="1" stopColor="#123a66" />
                        </radialGradient>
                    </defs>
                    <circle cx="18.500" cy="18.500" r="17.500" fill="url(#start)" stroke="#2a4465" />
                    <path d="M3.500 14a15.500 15.500 0 0130 0q-15 6-30 0z" fill="#fff" fillOpacity=".3" />
                    <path d="M11 10q4-2.500 7.500 0l-2 7.500q-3.500-2.500-7.500 0z" fill="#ee5a24" />
                    <path d="M20 11q4 2 8.500 0l-2 7q-4 2.500-8.500 0z" fill="#8cc63c" />
                    <path d="M8.500 19.500q4-2.500 7.500 0l-2 7q-3.500-2-7.500 0z" fill="#3f9ee8" />
                    <path d="M17.500 20.500q4 2 8 0l-2 7q-4 2-8 0z" fill="#fcc419" />
                </svg>
            </button>
        </div>
        <div className="flex gap-[3px]">
            <div className="flex w-[59px]">
                <TaskButton label="Internet Explorer" open width="w-[52px]">
                    <svg width="34" height="34" viewBox="0 0 34 34">
                        <path d="M27 23a10.500 10.500 0 11 2-5H12" fill="none" stroke="#2f9fe3" strokeWidth="5" />
                        <path d="M25 24a10 10 0 11 2.500-6" fill="none" stroke="#8fd4f8" strokeWidth="1.200" />
                        <path d="M5 29C0 25 8 9 20 4c9-4 11-1 9 4 0-4-4-4-9-1C11 11 4 22 7 27q2 3 8 0-6 5-10 2z" fill="#f7bd1d" />
                    </svg>
                </TaskButton>
                <div className="w-1 border-r border-[#7c90ab] bg-[#bccde1]" />
                <div className="w-[3px] border-r border-[#7c90ab]" />
            </div>
            <TaskButton label="Windows 탐색기" open width="w-[60px]">
                <svg width="36" height="34" viewBox="0 0 36 34">
                    <path d="M3 6l2-2h5l2 3h20v22H3z" fill="#efce6b" stroke="#c79b33" />
                    <path d="M6 5h6v3H6z" fill="#54b948" />
                    <path d="M14 6h8v4h-8zM22 8h8v4h-8z" fill="#fff" stroke="#c9a24a" />
                    <path d="M18 7h3v2h-3z" fill="#e0402c" />
                    <path d="M25 9h4v2h-4z" fill="#4a86dc" />
                    <path d="M2 12h32l-1 18H3z" fill="#f9e8a4" stroke="#d8b352" />
                    <path d="M8 31v-8q0-3 3-3h15q3 0 3 3v8h-4v-6H12v6z" fill="#9ad2f0" stroke="#4f9fce" />
                </svg>
            </TaskButton>
            <TaskButton label="Chrome" width="w-[57px]">
                <svg width="32" height="32" viewBox="0 0 32 32">
                    <circle cx="16" cy="16" r="15" fill="#fccd40" />
                    <path d="M3 8.500A15 15 0 0129 8.500H16a7.500 7.500 0 00-6.800 4.500z" fill="#dc4437" />
                    <path d="M3 8.500A15 15 0 0014 30.800l6.300-8.700A7.500 7.500 0 019.400 19.500z" fill="#1a9f59" />
                    <circle cx="16" cy="16" r="7.500" fill="#f4f4f4" />
                    <circle cx="16" cy="16" r="5.800" fill="#4886ec" />
                </svg>
            </TaskButton>
            <TaskButton label="한글" open width="w-[60px]">
                <svg width="32" height="32" viewBox="0 0 32 32">
                    <rect x="1" y="1" width="30" height="30" rx="7" fill="#f5f5f5" stroke="#42302f" />
                    <rect x="3.500" y="3.500" width="25" height="25" rx="5" fill="#c01019" stroke="#601015" />
                    <g fill="none" stroke="#fff" strokeWidth="2.200">
                        <path d="M13 6.500h6M9 10h14" />
                        <circle cx="16" cy="14.500" r="2.800" />
                        <path d="M24 9v11M10 19v5.500h13" />
                    </g>
                </svg>
            </TaskButton>
            <TaskButton label="Microsoft Excel" open width="w-[60px]">
                <svg width="32" height="32" viewBox="0 0 32 32">
                    <path d="M1 3l3-2h23v7H14v22l-13-3z" fill="#f2f8ef" stroke="#4fa13e" strokeWidth="1.500" />
                    <path d="M16 8h15v21l-15-1z" fill="#fff" stroke="#9ab896" />
                    <path d="M24 11h5v4h-5zM24 17h5v4h-5zM24 23h5v4h-5zM6 20h5v4H6zM12 22h5v4h-5zM18 22h5v5h-5z" fill="#63a956" />
                    <path d="M7 8h4l2.500 4L16 8h4l-4.500 6 5 7h-4.500l-3-4.500-3 4.500H6l5-7z" fill="#1d6b26" />
                </svg>
            </TaskButton>
        </div>
        <div className="flex-1" />
        <div className="flex items-center bg-linear-to-r from-[#a7c0dc] to-[#8193ab] to-15% pl-[44px] text-[13px]">
            <button aria-label="입력 도구" className="mb-1 mr-1">
                <svg width="17" height="17" viewBox="0 0 17 17">
                    <circle cx="7.500" cy="7.500" r="6.500" fill="#3b86cc" stroke="#2c5a8a" />
                    <path d="M3 3q4-3 6 0t-2 4-5 2zM9 8q4-2 4 1t-4 4z" fill="#69b445" />
                    <path d="M15 6l2 2-8 8-3 1 1-3z" fill="#f2c14a" stroke="#8b5a1c" strokeWidth=".7" />
                </svg>
            </button>
            <button className="mb-1.5 text-[17px] leading-5">가</button>
            <button className="mb-1.5 ml-1 text-[17px] leading-5">漢</button>
            <button aria-label="숨겨진 아이콘 표시" className="ml-3">
                <svg width="8" height="5" viewBox="0 0 8 5">
                    <path d="M4 0l4 5H0z" fill="#fff" />
                </svg>
            </button>
            <button aria-label="관리 센터" className="ml-3">
                <svg width="17" height="17" viewBox="0 0 17 17">
                    <path d="M1.500 1v15M3 2q3-1 5 1t6 0v7H3z" fill="#fff" stroke="#fff" />
                    <circle cx="11" cy="11.500" r="4.500" fill="#d8241c" stroke="#fff" strokeWidth=".7" />
                    <path d="M9 9.500l4 4M13 9.500l-4 4" stroke="#fff" strokeWidth="1.500" />
                </svg>
            </button>
            <button aria-label="네트워크" className="ml-2">
                <svg width="16" height="16" viewBox="0 0 16 16">
                    <path d="M5 3.500h10.500v8.500H5z" fill="#71829b" stroke="#fff" strokeWidth="1.500" />
                    <path d="M6 15h8M10 12v3M2.500 8v6h4M1 1v3h4V1M1 4l.5 3h3L5 4" stroke="#fff" fill="none" strokeWidth="1.200" />
                </svg>
            </button>
            <button aria-label="볼륨" className="ml-2">
                <svg width="17" height="16" viewBox="0 0 17 16">
                    <path d="M1 5.500h3l4-4v13l-4-4H1z" fill="#fff" />
                    <path d="M10 5.500q2 2.500 0 5M12 3.500q3.500 4.500 0 9M14 2q4.500 6 0 12" stroke="#fff" fill="none" />
                </svg>
            </button>
            <div className="ml-3 mr-2.5 w-[75px] pl-1 text-center leading-[17px]">
                <div>오후 4:20</div>
                <div>2018-09-10</div>
            </div>
            <button aria-label="바탕 화면 보기" className="h-full w-[15px] border border-[#39465a] bg-linear-to-b from-[#a9b5c6] via-[#67778f] to-[#7d8ca3]" />
        </div>
    </footer>
);

export default function App() {
    return (
        <div className="relative flex h-screen flex-col overflow-hidden bg-[#bfdbff] font-['Noto_Sans_CJK_KR','Noto_Sans',sans-serif] text-[13px] leading-4">
            <OfficeButton />
            <TitleBar />
            <RibbonTabs />
            <Ribbon />
            <FormulaBar />
            <main className="flex min-h-0 flex-1 bg-white">
                <div className="min-w-0 flex-1 overflow-hidden">
                    <Sheet />
                </div>
                <VerticalScrollbar />
            </main>
            <SheetTabs />
            <StatusBar />
            <Taskbar />
        </div>
    );
}
